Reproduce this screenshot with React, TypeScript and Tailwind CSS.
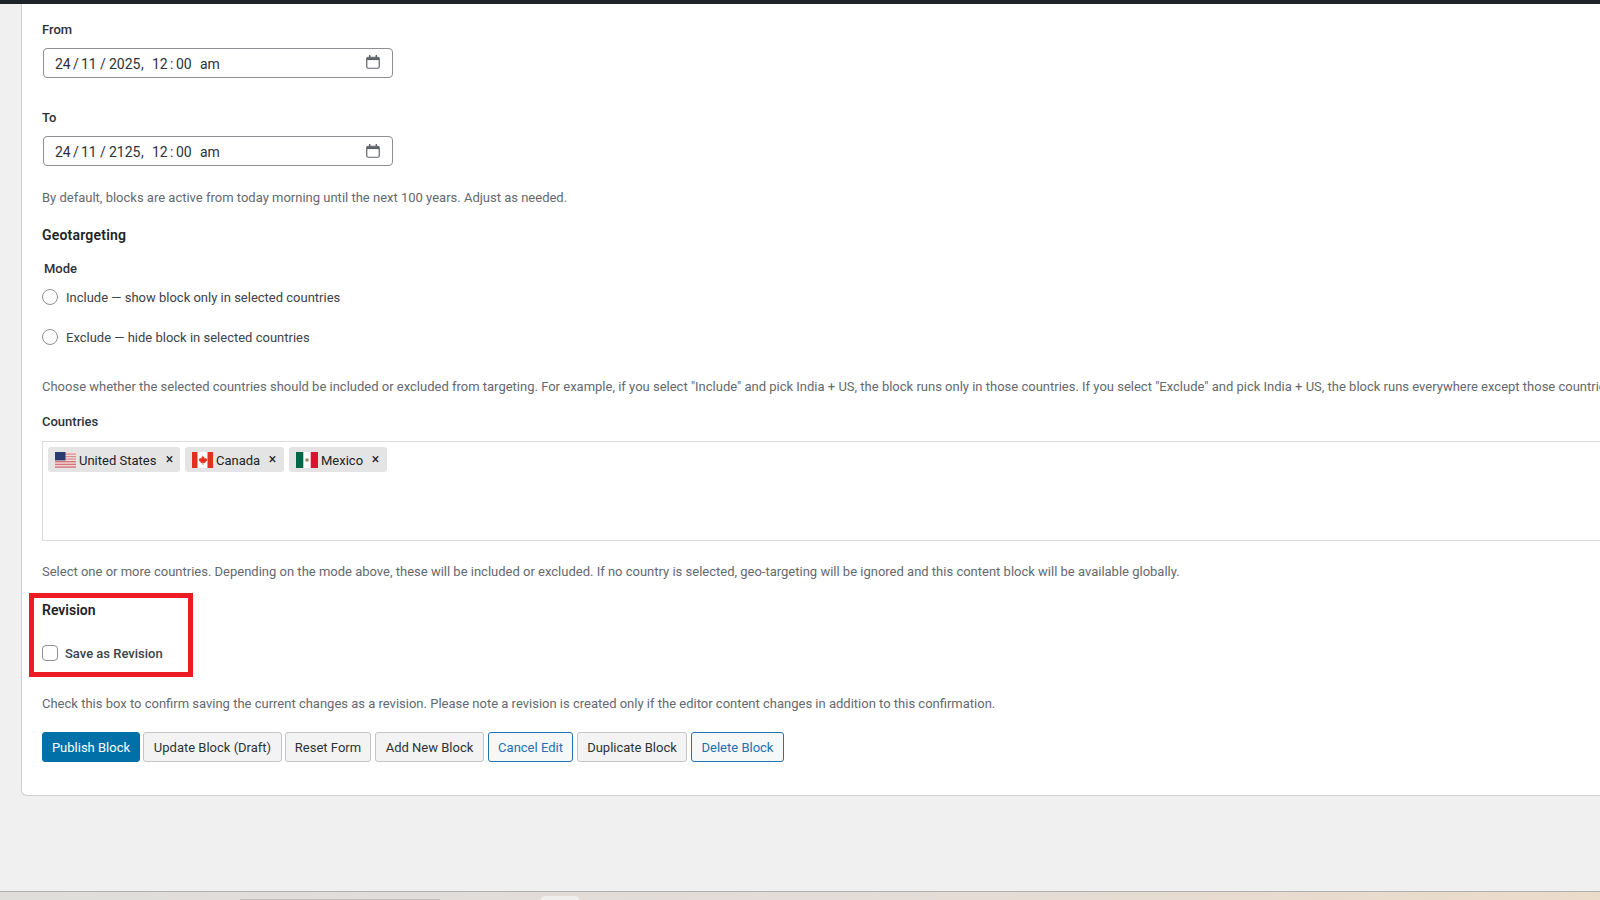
function CalendarIcon() {
  return (
    <svg width="14" height="14" viewBox="0 0 14 14" fill="none" className="shrink-0">
      <rect x="0.75" y="2.25" width="12.5" height="11" rx="1.5" stroke="#5f6368" strokeWidth="1.2" />
      <rect x="1" y="2.5" width="12" height="2.6" fill="#5f6368" />
      <rect x="3" y="0" width="1.4" height="2.5" fill="#5f6368" />
      <rect x="9.6" y="0" width="1.4" height="2.5" fill="#5f6368" />
    </svg>
  );
}

function DateInput({ year, iconClass }: { year: string; iconClass: string }) {
  return (
    <div className="ml-px mt-[9px] flex h-[30px] w-[350px] items-center rounded border border-[#8c8f94] bg-white pl-[11px] pr-3 text-sm text-[#2c3338]">
      <span className="mt-px flex items-center">
        <span className="w-[15px]">24</span>
        <span className="ml-[3px] w-[5px]">/</span>
        <span className="ml-[3px] w-[15px]">11</span>
        <span className="ml-[4px] w-[5px]">/</span>
        <span className="ml-[4px] w-[29px]">{year}</span>
        <span className="ml-[3px] w-[4px]">,</span>
        <span className="ml-[7px] w-[15px]">12</span>
        <span className="ml-[3px] w-[4px]">:</span>
        <span className="ml-[2px] w-[15px]">00</span>
        <span className="ml-[9px]">am</span>
      </span>
      <span className={`ml-auto ${iconClass}`}>
        <CalendarIcon />
      </span>
    </div>
  );
}

function UsFlag() {
  return (
    <svg width="21" height="16" viewBox="0 0 21 16" className="shrink-0">
      <rect width="21" height="16" fill="#f3dcdc" />
      <rect y="1.5" width="21" height="1.2" fill="#d98a8f" />
      <rect y="4" width="21" height="1.2" fill="#d98a8f" />
      <rect y="6.5" width="21" height="1.2" fill="#d98a8f" />
      <rect y="9" width="21" height="1.4" fill="#d4757c" />
      <rect y="11.7" width="21" height="1.4" fill="#d4757c" />
      <rect y="14.4" width="21" height="1.4" fill="#d4757c" />
      <rect width="10.5" height="8.4" fill="#2b3a6e" />
    </svg>
  );
}

function CanadaFlag() {
  return (
    <svg width="21" height="16" viewBox="0 0 21 16" className="shrink-0">
      <rect width="21" height="16" rx="1" fill="#ffffff" />
      <rect width="5.5" height="16" fill="#e0301e" />
      <rect x="15.5" width="5.5" height="16" fill="#e0301e" />
      <path
        d="M10.5 3l1 1.9 1-.5-.4 2.4 1.3-1 .4 1 1.4-.2-.5 1.4.6.4-2.2 1.7.3 1-2-.3v1.9h-.8v-1.9l-2 .3.3-1-2.2-1.7.6-.4-.5-1.4 1.4.2.4-1 1.3 1-.4-2.4 1 .5z"
        fill="#e0301e"
      />
    </svg>
  );
}

function MexicoFlag() {
  return (
    <svg width="22" height="16" viewBox="0 0 22 16" className="shrink-0">
      <rect width="22" height="16" fill="#ffffff" />
      <rect width="7.3" height="16" fill="#006847" />
      <rect x="14.7" width="7.3" height="16" fill="#dc1230" />
      <circle cx="11" cy="8" r="1.8" fill="#9a8560" />
    </svg>
  );
}

function Chip({ label, flag, textWidth, endClass }: { label: string; flag: React.ReactNode; textWidth: string; endClass: string }) {
  return (
    <div className={`flex h-[25px] items-center rounded-[3px] bg-[#e4e4e4] pl-[7px] text-[13px] text-[#1d2327] ${endClass}`}>
      {flag}
      <span className={`ml-[3px] whitespace-nowrap pt-0.5 ${textWidth}`}>{label}</span>
      <span className="ml-[10px] w-[9px] pb-[2px] text-center text-[14px] leading-none text-[#1d2327]">×</span>
    </div>
  );
}

function Help({ className, children }: { className: string; children: React.ReactNode }) {
  return <p className={`h-5 whitespace-nowrap text-[13px] leading-[22px] text-[#646970] ${className}`}>{children}</p>;
}

function Radio({ className, label }: { className: string; label: string }) {
  return (
    <label className={`flex h-5 items-center whitespace-nowrap text-[13px] text-[#3c434a] ${className}`}>
      <span className="h-4 w-4 shrink-0 rounded-full border border-[#8c8f94] bg-white" />
      <span className="ml-[8px] pt-0.5">{label}</span>
    </label>
  );
}

function Button({ children, kind, width }: { children: React.ReactNode; kind: "primary" | "secondary" | "outline"; width: string }) {
  const styles = {
    primary: "border-[#0071a8] bg-[#0071a8] text-white",
    secondary: "border-[#c3c4c7] bg-[#f3f3f3] text-[#2c3338]",
    outline: "border-[#2271b1] bg-[#f6f7f7] text-[#2271b1]",
  };
  return (
    <button className={`h-[30px] rounded-[3px] border pt-px text-center text-[13px] ${width} ${styles[kind]}`}>{children}</button>
  );
}

export default function App() {
  return (
    <div className="flex h-screen w-screen flex-col overflow-hidden bg-[#f0f0f1] font-['Roboto',sans-serif]">
      <div className="h-1 shrink-0 bg-[#1d2327]" />
      <div className="flex-1 pl-[21px]">
        <div className="w-[1700px] rounded-bl-md border-b border-l border-[#d0d0d0] bg-white pb-[33px] pl-5 pt-[15px]">
          <label className="block h-5 text-[13px] font-medium leading-[22px] text-[#2c3338]">From</label>
          <DateInput year="2025" iconClass="-mt-[3px]" />
          <label className="mt-[29px] block h-5 text-[13px] font-medium leading-[22px] text-[#2c3338]">To</label>
          <DateInput year="2125" iconClass="-mt-px" />
          <Help className="mt-[21px]">By default, blocks are active from today morning until the next 100 years. Adjust as needed.</Help>

          <h3 className="mt-[18px] h-5 text-[14px] font-semibold leading-5 tracking-[0.2px] text-[#1d2327]">Geotargeting</h3>
          <div className="ml-[2px] mt-[13px] h-5 text-[13px] font-medium leading-[22px] text-[#2c3338]">Mode</div>
          <Radio className="mt-[9px]" label="Include — show block only in selected countries" />
          <Radio className="mt-5" label="Exclude — hide block in selected countries" />
          <Help className="mt-[29px]">
            Choose whether the selected countries should be included or excluded from targeting. For example, if you select "Include" and pick India + US, the block runs only in those countries. If you select "Exclude" and pick India + US, the block runs everywhere except those countries.
          </Help>

          <label className="mt-[15px] block h-5 text-[13px] font-medium leading-[22px] text-[#2c3338]">Countries</label>
          <div className="mt-[10px] flex h-[100px] items-start gap-[5px] border border-[#dcdcde] bg-white pl-[5px] pt-[5px]">
            <Chip label="United States" flag={<UsFlag />} textWidth="w-[76px]" endClass="pr-[6px]" />
            <Chip label="Canada" flag={<CanadaFlag />} textWidth="w-[42px]" endClass="pr-[7px]" />
            <Chip label="Mexico" flag={<MexicoFlag />} textWidth="w-[40px]" endClass="pr-[7px]" />
          </div>
          <Help className="mt-[20px]">
            Select one or more countries. Depending on the mode above, these will be included or excluded. If no country is selected, geo-targeting will be ignored and this content block will be available globally.
          </Help>

          <div className="relative mt-[19px]">
            <div className="absolute left-[-13px] top-[-7px] h-[84px] w-[164px] border-[5px] border-[#ed1c24]" />
            <h3 className="h-5 text-[14px] font-semibold leading-5 text-[#1d2327]">Revision</h3>
            <label className="mt-[23px] flex h-5 items-center text-[13px] font-medium text-[#3c434a]">
              <span className="h-4 w-4 rounded-[4px] border border-[#8c8f94] bg-white" />
              <span className="ml-[7px] pt-0.5">Save as Revision</span>
            </label>
          </div>

          <Help className="mt-[30px]">
            Check this box to confirm saving the current changes as a revision. Please note a revision is created only if the editor content changes in addition to this confirmation.
          </Help>

          <div className="mt-[19px] flex gap-[3px]">
            <Button kind="primary" width="w-[98px]">Publish Block</Button>
            <Button kind="secondary" width="w-[139px]">Update Block (Draft)</Button>
            <Button kind="secondary" width="w-[86px]">Reset Form</Button>
            <Button kind="secondary" width="ml-px w-[109px]">Add New Block</Button>
            <Button kind="outline" width="ml-px w-[85px]">Cancel Edit</Button>
            <Button kind="secondary" width="ml-px w-[110px]">Duplicate Block</Button>
            <Button kind="outline" width="ml-px w-[93px]">Delete Block</Button>
          </div>
        </div>
      </div>
      <div className="relative h-[9px] shrink-0 border-t border-[#b0b0b0] bg-gradient-to-r from-[#dfdedb] via-[#e3dcd8] to-[#ebdbc9]">
        <div className="absolute left-[240px] top-[7px] h-px w-[200px] bg-[#bdbdbd]" />
        <div className="absolute left-[541px] top-[4px] h-1 w-[38px] rounded-t-sm bg-[#f0eeec]" />
      </div>
    </div>
  );
}
